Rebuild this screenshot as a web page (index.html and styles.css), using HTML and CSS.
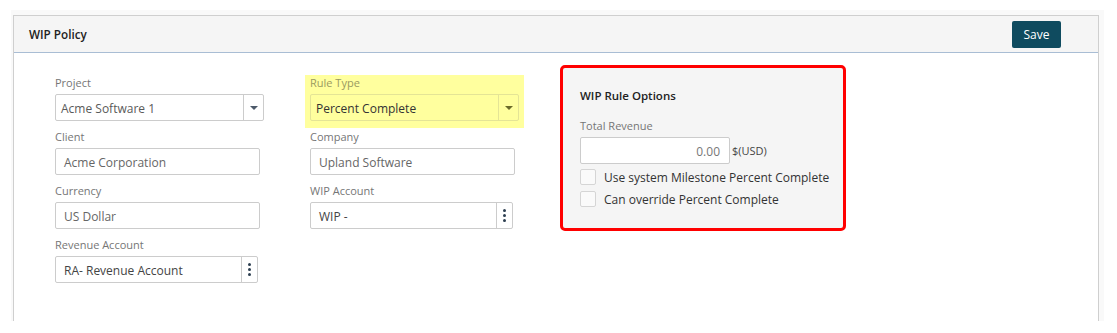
FILE: index.html
```html
<!DOCTYPE html>
<html>
<head>
<meta charset="utf-8">
<link rel="stylesheet" href="styles.css">
</head>
<body>
<div class="frame">
  <div class="panel">
    <div class="panel-head">
      <span class="panel-title">WIP Policy</span>
      <button class="btn-save">Save</button>
    </div>
    <div class="panel-body">
      <div class="col">
        <div class="group">
          <div class="label">Project</div>
          <div class="control w209">
            <span class="value sel">Acme Software 1</span>
            <span class="addon caret-addon"><span class="caret"></span></span>
          </div>
        </div>
        <div class="group">
          <div class="label">Client</div>
          <div class="control w205"><span class="value">Acme Corporation</span></div>
        </div>
        <div class="group">
          <div class="label">Currency</div>
          <div class="control w205"><span class="value">US Dollar</span></div>
        </div>
        <div class="group">
          <div class="label">Revenue Account</div>
          <div class="control w203">
            <span class="value dark">RA- Revenue Account</span>
            <span class="addon kebab-addon"><span class="kebab"><i></i><i></i><i></i></span></span>
          </div>
        </div>
      </div>
      <div class="col col2">
        <div class="highlight">
          <div class="label">Rule Type</div>
          <div class="control w209 hl-control">
            <span class="value sel darker">Percent Complete</span>
            <span class="addon caret-addon hl-addon"><span class="caret"></span></span>
          </div>
        </div>
        <div class="group after-hl">
          <div class="label">Company</div>
          <div class="control w205"><span class="value">Upland Software</span></div>
        </div>
        <div class="group">
          <div class="label">WIP Account</div>
          <div class="control w203">
            <span class="value dark">WIP -</span>
            <span class="addon kebab-addon"><span class="kebab"><i></i><i></i><i></i></span></span>
          </div>
        </div>
      </div>
      <div class="options">
        <div class="options-title">WIP Rule Options</div>
        <div class="label">Total Revenue</div>
        <div class="rev-row">
          <div class="control w150 num"><span class="value">0.00</span></div>
          <span class="unit">$(USD)</span>
        </div>
        <label class="check first"><span class="box"></span><span>Use system Milestone Percent Complete</span></label>
        <label class="check"><span class="box"></span><span>Can override Percent Complete</span></label>
      </div>
    </div>
  </div>
</div>
</body>
</html>
```
FILE: styles.css
```css
* { box-sizing: border-box; }
html, body { margin: 0; padding: 0; background: #ffffff; }
body {
  font-family: "Open Sans", "Liberation Sans", sans-serif;
  font-size: 12px;
  color: #333;
}
.frame {
  margin: 10px 13px 0 11px;
  padding: 5px 5px 0 2px;
  background: #f9f9f9;
  height: 311px;
}
.panel {
  border: 1px solid #cfcfcf;
  border-bottom: none;
  background: #fff;
  height: 306px;
}
.panel-head {
  height: 37px;
  background: #f5f5f5;
  border-bottom: 1px solid #a9bdd4;
  display: flex;
  align-items: center;
  justify-content: space-between;
  padding: 0 37px 0 15px;
}
.panel-title {
  font-size: 11.7px;
  font-weight: 600;
  color: #222;
}
.btn-save {
  font-family: "Open Sans", "Liberation Sans", sans-serif;
  font-size: 12px;
  color: #fff;
  background: #0f4b5f;
  border: none;
  border-radius: 2px;
  height: 27px;
  width: 49px;
  padding: 0;
  margin-top: 1px;
}
.panel-body {
  display: flex;
  align-items: flex-start;
  padding: 0 0 0 41px;
}
.col { width: 255px; padding-top: 14px; }
.col2 { width: 255px; padding-top: 22px; margin-left: -5px; }
.group { margin-top: 7px; }
.col2 .group { margin-left: 5px; }
.col2 .group.after-hl { margin-top: 0; }
.label {
  font-size: 11px;
  line-height: 18px;
  color: #767676;
  margin-bottom: 2px;
}
.control {
  height: 27px;
  border: 1px solid #cccccc;
  border-radius: 2px;
  background: #fff;
  display: flex;
  align-items: center;
  font-size: 12px;
  color: #666;
}
.control .value { flex: 1; padding-left: 8px; padding-top: 1px; white-space: nowrap; }
.control .value.sel { padding-left: 5px; color: #5a5a5a; }
.control .value.dark { color: #444; }
.control .value.darker { color: #333; }
.w209 { width: 209px; }
.w205 { width: 205px; }
.w203 { width: 203px; }
.w150 { width: 150px; }
.addon {
  height: 100%;
  border-left: 1px solid #cccccc;
  display: flex;
  align-items: center;
  justify-content: center;
}
.caret-addon { width: 20px; }
.caret {
  width: 0; height: 0;
  border-left: 4px solid transparent;
  border-right: 4px solid transparent;
  border-top: 4px solid #4d5a6a;
}
.kebab-addon { width: 16px; }
.kebab { display: flex; flex-direction: column; gap: 2px; }
.kebab i { display: block; width: 3px; height: 3px; background: #2c3e50; border-radius: 50%; }
.highlight {
  width: 219px;
  background: #ffff9e;
  padding: 0 5px 7px 5px;
}
.highlight .label { color: #9a9a60; line-height: 16px; margin-bottom: 3px; }
.hl-control { background: transparent; border-color: #e4e496; }
.hl-addon { border-left-color: #e4e496; }
.hl-control .caret { border-top-color: #6b6b2a; }
.options {
  margin-top: 12px;
  width: 286px;
  height: 166px;
  border: 3px solid #ff0000;
  border-radius: 5px;
  background: #f5f5f5;
  padding: 19px 10px 0 17px;
}
.options-title {
  font-size: 11.5px;
  font-weight: 600;
  color: #222;
  line-height: 18px;
  margin-bottom: 12px;
}
.options .label { margin-bottom: 2px; }
.rev-row { display: flex; align-items: center; }
.num .value { text-align: right; padding-right: 9px; padding-left: 0; color: #777; }
.unit { font-size: 11px; color: #444; margin-left: 2px; }
.check {
  display: flex;
  align-items: center;
  height: 16px;
  margin-top: 6px;
  font-size: 12px;
  color: #333;
  white-space: nowrap;
}
.check.first { margin-top: 5px; }
.check .box {
  width: 16px;
  height: 16px;
  border: 1px solid #d5d5d5;
  border-radius: 2px;
  background: #fafafa;
  margin-right: 8px;
  flex: none;
}
```
